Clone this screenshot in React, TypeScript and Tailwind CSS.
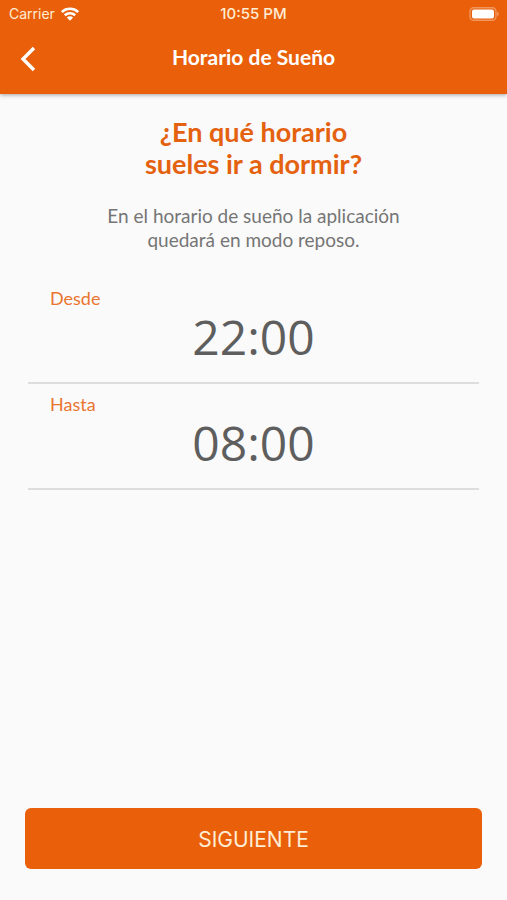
import { useState } from "react";

function StatusBar() {
  return (
    <div className="grid h-7 grid-cols-3 items-center px-2 font-['Inter','Liberation_Sans',sans-serif] text-sm text-orange-100">
      <div className="flex items-center gap-1.5 pl-px">
        <span>Carrier</span>
        <svg viewBox="0 0 18 14" className="h-3.5 w-[18px]" fill="none" stroke="white" strokeWidth="2.6" aria-hidden="true">
          <path d="M.8 5C5.4.7 12.6.7 17.2 5" />
          <path d="M3.8 8.3C6.8 5.500 11.200 5.500 14.200 8.300" />
          <path d="M5.800 10.600Q9 7.800 12.200 10.600L9 13.800Z" fill="white" stroke="none" />
        </svg>
      </div>
      <span className="text-center text-[15px] font-medium whitespace-nowrap">10:55 PM</span>
      <svg viewBox="0 0 30 14" className="h-3.5 w-[30px] justify-self-end" aria-hidden="true">
        <rect x="1" y=".7" width="26" height="12.600" rx="3.800" fill="none" stroke="white" strokeOpacity=".35" strokeWidth="1.400" />
        <rect x="3" y="2.500" width="22" height="9" rx="2" fill="white" />
        <path d="M28.300 4.800c2 .6 2 3.800 0 4.400z" fill="white" fillOpacity=".4" />
      </svg>
    </div>
  );
}

function TimeField({ id, label, initial }: { id: string; label: string; initial: string }) {
  const [value, setValue] = useState(initial);
  return (
    <div className="flex flex-col border-b-2 border-[#dddddd] pt-2 pb-5">
      <label htmlFor={id} className="px-[22px] text-lg leading-6 text-[#ea7530]">
        {label}
      </label>
      <input
        id={id}
        type="text"
        inputMode="numeric"
        value={value}
        onChange={(e) => setValue(e.target.value)}
        className="h-[52px] w-full bg-transparent text-center font-['Open_Sans','Noto_Sans',sans-serif] text-5xl text-[#5e5e5e] outline-none"
      />
    </div>
  );
}

export default function App() {
  return (
    <div className="flex min-h-screen flex-col bg-[#fafafa] font-['Lato','Noto_Sans',sans-serif]">
      <header className="bg-[#e95f0a] text-white shadow-[0_1px_4px_rgba(0,0,0,0.35)]">
        <StatusBar />
        <div className="grid h-[66px] grid-cols-[56px_1fr_56px] items-center pb-1">
          <button type="button" aria-label="Volver" className="flex h-12 items-center justify-center">
            <svg viewBox="0 0 16 26" className="h-[26px] w-4" fill="none" stroke="white" strokeWidth="3.400" aria-hidden="true">
              <path d="M14 2L3 13L14 24" />
            </svg>
          </button>
          <h1 className="pb-1 text-center text-[21px] font-bold">Horario de Sueño</h1>
        </div>
      </header>

      <main className="flex flex-1 flex-col">
        <h2 className="pt-[22px] text-center text-[27px] leading-8 font-bold text-[#e4610f]">
          ¿En qué horario
          <br />
          sueles ir a dormir?
        </h2>
        <p className="pt-6 text-center text-[19px] leading-6 text-[#757575]">
          En el horario de sueño la aplicación
          <br />
          quedará en modo reposo.
        </p>
        <div className="mx-7 mt-[26px]">
          <TimeField id="desde" label="Desde" initial="22:00" />
          <TimeField id="hasta" label="Hasta" initial="08:00" />
        </div>
      </main>

      <footer className="px-[25px] pb-[31px]">
        <button
          type="button"
          className="h-[61px] w-full rounded-md bg-[#e95f0a] pt-0.5 font-['Inter','Liberation_Sans',sans-serif] text-[21px] text-orange-100"
        >
          SIGUIENTE
        </button>
      </footer>
    </div>
  );
}
